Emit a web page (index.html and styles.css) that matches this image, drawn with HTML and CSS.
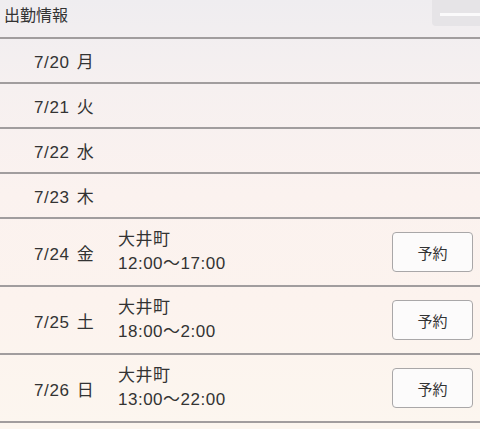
FILE: index.html
```html
<!DOCTYPE html>
<html lang="ja">
<head>
<meta charset="utf-8">
<link rel="stylesheet" href="styles.css">
</head>
<body>
<div class="page">
  <div class="header">
    <span class="title">出勤情報</span>
    <div class="menu"><span class="bar"></span></div>
  </div>
  <div class="row"><span class="date">7/20 月</span></div>
  <div class="row"><span class="date">7/21 火</span></div>
  <div class="row"><span class="date">7/22 水</span></div>
  <div class="row"><span class="date">7/23 木</span></div>
  <div class="row tall">
    <span class="date">7/24 金</span>
    <div class="info"><span>大井町</span><span>12:00〜17:00</span></div>
    <button class="btn">予約</button>
  </div>
  <div class="row tall">
    <span class="date">7/25 土</span>
    <div class="info"><span>大井町</span><span>18:00〜2:00</span></div>
    <button class="btn">予約</button>
  </div>
  <div class="row tall">
    <span class="date">7/26 日</span>
    <div class="info"><span>大井町</span><span>13:00〜22:00</span></div>
    <button class="btn">予約</button>
  </div>
</div>
</body>
</html>
```
FILE: styles.css
```css
html, body {
  margin: 0;
  padding: 0;
}
body {
  width: 480px;
  height: 429px;
  overflow: hidden;
  font-family: "Liberation Sans", "Noto Sans CJK JP", sans-serif;
  color: #333;
  background: linear-gradient(180deg, #efedf0 0%, #f6f0f0 20%, #fbf2ef 45%, #fcf3ee 70%, #fcf6ef 100%);
}
.page {
  display: flex;
  flex-direction: column;
}
.header {
  height: 37px;
  border-bottom: 2px solid #a19d9e;
  display: flex;
  align-items: flex-start;
  justify-content: space-between;
}
.title {
  font-family: "Noto Sans CJK JP", sans-serif;
  font-size: 16px;
  line-height: 28px;
  padding-left: 4px;
  color: #333;
}
.menu {
  width: 48px;
  height: 26px;
  background: #e6e4e7;
  border-radius: 0 0 0 4px;
  display: flex;
  align-items: center;
  justify-content: flex-end;
}
.bar {
  width: 40px;
  height: 3px;
  background: #fbfafb;
  margin-top: 3px;
}
.row {
  height: 43px;
  border-bottom: 2px solid #a19d9e;
  display: flex;
  align-items: center;
}
.row.tall {
  height: 66px;
}
.date {
  width: 84px;
  padding-left: 34px;
  font-size: 17px;
  letter-spacing: 0.6px;
  word-spacing: 2px;
  color: #333;
}
.info {
  display: flex;
  flex-direction: column;
  font-size: 17px;
  letter-spacing: 0.5px;
  line-height: 24px;
  flex: 1;
  color: #333;
}
.btn {
  width: 81px;
  height: 40px;
  margin-right: 7px;
  border: 1px solid #a9a7a8;
  border-radius: 4px;
  background: #fcfbfb;
  font-family: "Noto Sans CJK JP", sans-serif;
  font-size: 15px;
  color: #333;
  padding: 0;
}
```
